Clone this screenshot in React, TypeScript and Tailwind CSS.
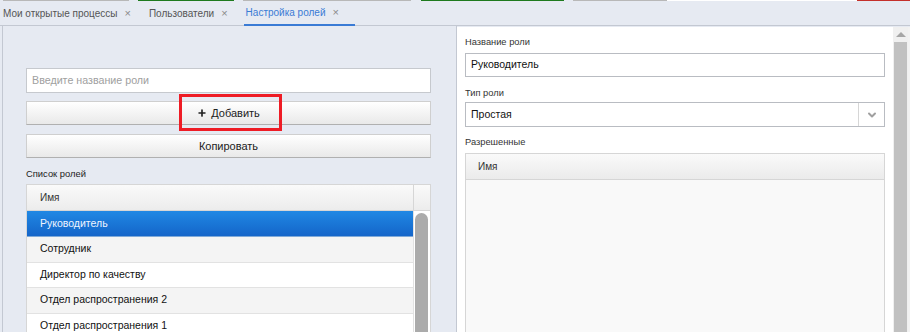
import { ChevronDown, Plus } from 'lucide-react'

const topStrip = [
  { w: 3, c: 'bg-transparent' },
  { w: 126, c: 'bg-[#b8b8b8]' },
  { w: 9, c: 'bg-transparent' },
  { w: 96, c: 'bg-[#1e7a1e]' },
  { w: 9, c: 'bg-transparent' },
  { w: 168, c: 'bg-[#b8b8b8]' },
  { w: 10, c: 'bg-transparent' },
  { w: 143, c: 'bg-[#1e7a1e]' },
  { w: 9, c: 'bg-transparent' },
  { w: 94, c: 'bg-[#b8b8b8]' },
  { w: 190, c: 'bg-white' },
  { w: 53, c: 'bg-[#c4302b]' },
]

const tabs = [
  { title: 'Мои открытые процессы', active: false },
  { title: 'Пользователи', active: false },
  { title: 'Настройка ролей', active: true },
]

const roles = [
  'Руководитель',
  'Сотрудник',
  'Директор по качеству',
  'Отдел распространения 2',
  'Отдел распространения 1',
]

export default function App() {
  return (
    <div className="w-[910px] h-[332px] overflow-hidden bg-[#e6eaf2] font-['Liberation_Sans',Arial,sans-serif] text-[#222] flex flex-col">
      {/* Верхняя полоса */}
      <div className="flex h-[1px] shrink-0">
        {topStrip.map((s, i) => (
          <div key={i} className={s.c} style={{ width: s.w }} />
        ))}
      </div>

      {/* Вкладки */}
      <div className="flex h-[25px] shrink-0 items-stretch border-b border-[#c3c8d2] pl-[3px]">
        {tabs.map((tab) => (
          <div
            key={tab.title}
            className={`flex items-center gap-[7px] pr-[16px] mr-[2px] text-[10px] ${
              tab.active ? 'text-[#3a7bd5] border-b-2 border-[#3a7bd5] -mb-[1px] pl-[2px] -ml-[2px]' : 'text-[#555]'
            }`}
          >
            <span>{tab.title}</span>
            <span className="text-[11px] leading-none text-[#8a8a8a]">×</span>
          </div>
        ))}
      </div>

      <div className="flex flex-1 min-h-0">
        {/* Левая панель */}
        <div className="w-[455px] shrink-0 ml-[2px] border-l border-r border-[#c3c8d2] pl-[23px] pr-[24px] pt-[42px]">
          <div className="w-[405px]">
            <div className="h-[25px] bg-white border border-[#c6c9ce] flex items-center px-[5px] text-[10.7px] text-[#a0a0a0]">
              Введите название роли
            </div>

            <div className="relative mt-[8px]">
              <button className="w-full h-[24px] border border-[#cfcfcf] border-b-[#b0b0b0] bg-gradient-to-b from-white to-[#e9e9e9] flex items-center justify-center gap-[4px] text-[11px] text-[#222]">
                <Plus className="w-[10px] h-[10px] text-[#222]" strokeWidth={4} />
                Добавить
              </button>
              <div className="absolute left-[153px] -top-[7px] w-[103px] h-[37px] border-[3px] border-[#ee1c25]" />
            </div>

            <button className="mt-[9px] w-full h-[24px] border border-[#cfcfcf] border-b-[#b0b0b0] bg-gradient-to-b from-white to-[#e9e9e9] flex items-center justify-center text-[11px] text-[#222]">
              Копировать
            </button>

            <div className="mt-[10px] text-[9.4px] leading-[12px] text-[#222]">Список ролей</div>

            <div className="mt-[4px] border border-[#d6d6d6] border-b-0">
              <div className="flex h-[26px] bg-gradient-to-b from-[#fafafa] to-[#ececec] border-b border-[#d6d6d6]">
                <div className="flex-1 flex items-center pl-[13px] text-[10px] text-[#333]">Имя</div>
                <div className="w-[17px] border-l border-[#d6d6d6]" />
              </div>
              <div className="flex">
                <div className="flex-1">
                  {roles.map((role, i) => (
                    <div
                      key={role}
                      className={`flex items-center pl-[13px] text-[10.5px] border-b ${
                        i === 0
                          ? 'h-[26px] bg-gradient-to-b from-[#2088e4] to-[#1565c9] text-[#eef4ff] border-[#7fa9d8]'
                          : i % 2 === 1
                          ? 'h-[25.5px] bg-[#f4f4f4] border-[#e2e2e2] text-[#111]'
                          : 'h-[25.5px] bg-white border-[#e2e2e2] text-[#111]'
                      }`}
                    >
                      {role}
                    </div>
                  ))}
                </div>
                <div className="w-[17px] bg-white border-l border-[#e2e2e2] pl-[1px] pr-[2px] pt-[2px]">
                  <div className="h-[140px] rounded-t-[7px] bg-[#ababab]" />
                </div>
              </div>
            </div>
          </div>
        </div>

        {/* Правая панель */}
        <div className="flex-1 flex bg-[#f2f2f2] mt-[1px]">
          <div className="w-[436px] bg-white pl-[8px] pt-[9px]">
            <div className="text-[9.3px] leading-[12px] text-[#333]">Название роли</div>
            <div className="mt-[5px] w-[420px] h-[24px] border border-[#b9bcc2] flex items-center px-[5px] text-[10.5px] text-[#111]">
              Руководитель
            </div>
            <div className="mt-[10px] text-[9.3px] leading-[12px] text-[#333]">Тип роли</div>
            <div className="mt-[3px] w-[420px] h-[25px] border border-[#b9bcc2] flex items-center">
              <div className="flex-1 px-[5px] text-[10.5px] text-[#111]">Простая</div>
              <div className="w-[26px] h-full border-l border-[#d6d6d6] flex items-center justify-center">
                <ChevronDown className="w-[12px] h-[12px] text-[#a0a0a0]" strokeWidth={4} />
              </div>
            </div>
            <div className="mt-[9px] text-[9.3px] leading-[12px] text-[#333]">Разрешенные</div>
            <div className="mt-[5px] w-[420px] h-[200px] border border-[#d6d6d6] bg-[#f9f9f9]">
              <div className="h-[26px] bg-gradient-to-b from-[#fafafa] to-[#ebebeb] border-b border-[#d6d6d6] flex items-center pl-[12px] text-[10px] text-[#333]">
                Имя
              </div>
            </div>
          </div>
          <div className="w-[15px] bg-[#f0f0f0] flex flex-col items-center">
            <div className="h-[15px] flex items-center justify-center">
              <div className="w-0 h-0 border-l-[5px] border-r-[5px] border-b-[5px] border-l-transparent border-r-transparent border-b-[#a6a6a6]" />
            </div>
            <div className="w-[13px] flex-1 bg-[#c1c1c1]" />
          </div>
        </div>
      </div>
    </div>
  )
}
